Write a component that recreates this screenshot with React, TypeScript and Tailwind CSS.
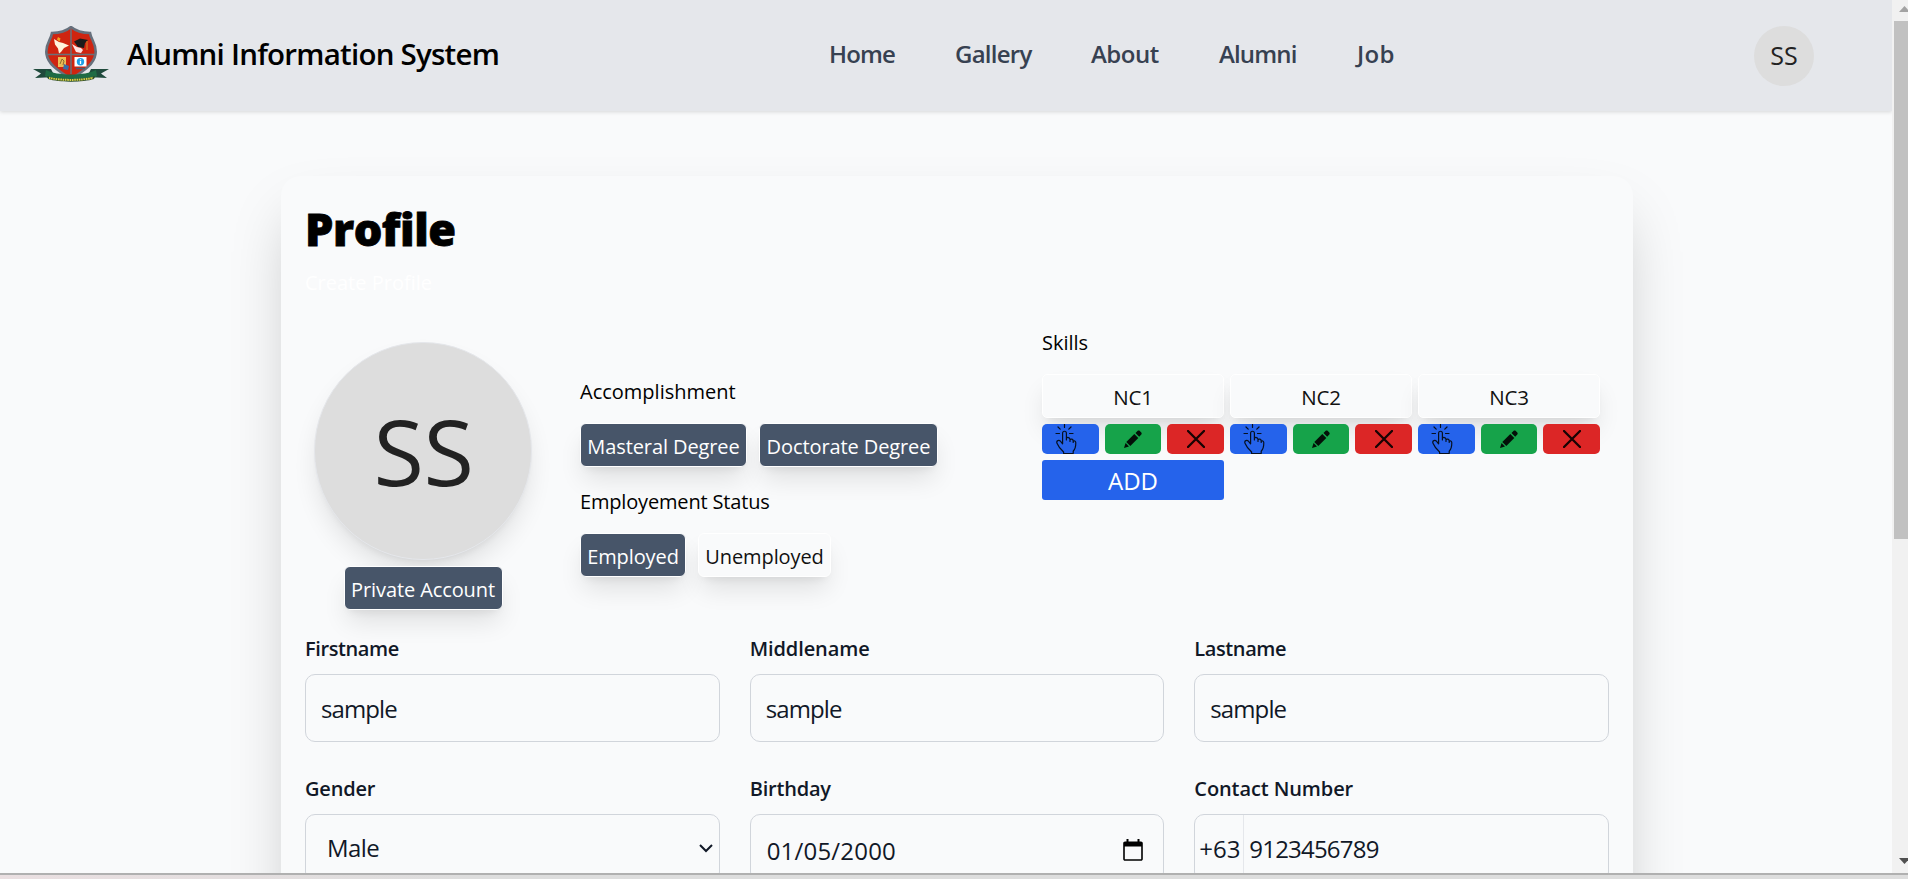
import React from "react";

const cn = (...c: (string | undefined)[]) => c.filter(Boolean).join(" ");

function Crest() {
  return (
    <svg width="76" height="56" viewBox="0 0 76 56" className="block">
      <path d="M0 43 L18 43 L22 51 L2 52 L8 47.5 Z" fill="#1f4a3c" />
      <path d="M76 43 L58 43 L54 51 L74 52 L68 47.5 Z" fill="#1f4a3c" />
      <path d="M38 1 C32 6 26 7 19 7 C18 14 12 18 13.500 28 C15 38 24 44 38 53 C52 44 61 38 62.500 28 C64 18 58 14 57 7 C50 7 44 6 38 1Z" fill="#cf2410" stroke="#66707c" strokeWidth="2.600" />
      <path d="M38 3 V48 M14 28.500 H62" stroke="#6b7078" strokeWidth="1.500" />
      <path d="M21 13 l5 3 4 1 6 2.500 -5 2.500 -3 4 -2 1.500 -1-5 -3-4z" fill="#fff3dc" />
      <path d="M25 11 l2.500 1.500 -1 3 -2.500-2z" fill="#f2a022" />
      <path d="M41 15.500 l6-3 8 1.500 -3 3 -1 5 -6-1z" fill="#1b1b1b" />
      <path d="M39 18 l5 3 4 1 2 2 -2 3 -5-1z" fill="#fbe3e3" />
      <path d="M54 15 l0 9" stroke="#d58a2a" strokeWidth="1" />
      <rect x="25" y="31" width="8" height="10" fill="#eebb55" />
      <path d="M27 38 l2-5 2 2 -1 4" stroke="#6d5a2a" strokeWidth=".8" fill="none" />
      <path d="M31 38 l5 2 -1 4 -5-1z" fill="#3c6ea5" />
      <rect x="41.500" y="31" width="12" height="9.500" fill="#fff" />
      <circle cx="47.500" cy="35.700" r="3.700" fill="#1f9fe6" />
      <path d="M47.500 33.200 v1 M47.500 35 v3" stroke="#fff" strokeWidth="1.300" />
      <path d="M43 42.500 h9" stroke="#4b5d70" strokeWidth="1.500" />
      <path d="M13 44 C24 50 52 50 63 44 L64 50 C56 57 20 57 12 50 Z" fill="#1f6b45" />
      <path d="M14 50 C26 54 50 54 62 50 L61 53 C50 56.500 26 56.500 15 53Z" fill="#2c4a28" />
      <path d="M16 51.800 C28 54.600 48 54.600 60 51.800" stroke="#d6d24a" strokeWidth="2" strokeDasharray="1.600 .7" fill="none" />
    </svg>
  );
}

const TapIcon = () => (
  <svg width="22" height="30" viewBox="0 0 22 30" fill="none" stroke="#06101f" strokeWidth="1.200" strokeLinecap="round" strokeLinejoin="round">
    <path d="M9.500 .5V3.500M3 3l2.200 2.200M16 3l-2.200 2.200M1 9.500H4.500M14.500 9.500H18" />
    <path d="M7.600 19.500V9.200C7.600 6.600 11.400 6.600 11.400 9.200V16M11.400 14.500c.6-1.600 3.600-1.300 3.600 1V17.500M15 15.800c.8-1.300 3.200-.8 3.200 1.200V18.500M18.200 17.300c.9-.9 2.600-.2 2.600 1.500 0 4-.3 6.200-2.600 8.400V29.500H8.600V28C5.500 25.300 3.300 22.300 2 19.200c-1-2.500 2-3.700 3.400-2L7.600 19.800" />
  </svg>
);

const PencilIcon = () => (
  <svg width="18" height="18" viewBox="0 0 18 18" fill="#031008">
    <path d="M0 18 L1.600 13 L5 16.400 Z" />
    <path d="M2.300 11.900 L10.300 3.900 L14.300 7.900 L6.300 15.900 Z" />
    <path d="M11.500 3 L13.700 .8 C14.200 .3 15.100 .3 15.600 .8 L17.300 2.500 C17.800 3 17.800 3.900 17.300 4.400 L15.200 6.700 Z" />
  </svg>
);

const CloseIcon = () => (
  <svg width="18" height="18" viewBox="0 0 18 18" stroke="#170303" strokeWidth="2.300" strokeLinecap="round">
    <path d="M1 1 L17 17 M17 1 L1 17" />
  </svg>
);

const CalendarIcon = () => (
  <svg width="20" height="22" viewBox="0 0 20 22">
    <path d="M2 2.500H18C19 2.500 19.800 3.300 19.800 4.300V20C19.800 21 19 21.800 18 21.800H2C1 21.800 .2 21 .2 20V4.300C.2 3.300 1 2.500 2 2.500ZM1.800 7.500V20.200H18.200V7.500Z" fill="#000" fillRule="evenodd" />
    <path d="M3.500 0h2v3h-2zM14.500 0h2v3h-2z" fill="#000" />
  </svg>
);

const raised = "shadow-[0_15px_26px_-4px_rgba(0,0,0,0.11),0_6px_9px_-6px_rgba(0,0,0,0.1)]";

function Chip({ label, width, active = true }: { label: string; width: string; active?: boolean }) {
  return (
    <div
      className={cn(
        "flex h-[44px] shrink-0 items-center justify-center rounded-[6px] border border-white text-[20px]",
        raised,
        width,
        active ? "bg-[#475569] text-white" : "bg-[#f9fafb] text-[#111]"
      )}
    >
      <span className="whitespace-nowrap pt-[4px] leading-[30px] tracking-[-0.1px]">{label}</span>
    </div>
  );
}

const NAV = [
  { label: "Home", cls: "w-[126px] tracking-[-0.9px]" },
  { label: "Gallery", cls: "w-[136px] tracking-[-0.75px]" },
  { label: "About", cls: "w-[128px] tracking-[-0.5px]" },
  { label: "Alumni", cls: "w-[138px] tracking-[-0.85px]" },
  { label: "Job", cls: "w-[60px] tracking-[0.3px]" },
];

function Skill({ name }: { name: string }) {
  return (
    <div className="flex flex-col gap-[6px]">
      <div className={cn("flex h-[44px] items-center justify-center rounded-[5px] border border-white bg-[#f9fafb] pt-[2px] text-[20.5px] text-[#111]", raised)}>
        <span className="tracking-[-0.2px]">{name}</span>
      </div>
      <div className="relative grid h-[30px] grid-cols-[57px_56px_57px] gap-[6px]">
        <div className="overflow-hidden rounded-[5px] bg-[#2563eb] pl-[13px]"><TapIcon /></div>
        <div className="flex items-center justify-center rounded-[5px] bg-[#16a34a]"><PencilIcon /></div>
        <div className="flex items-center justify-center rounded-[5px] bg-[#dc2626]"><CloseIcon /></div>
      </div>
    </div>
  );
}

function Field({ label, text, children }: { label: string; text: string; children: React.ReactNode }) {
  return (
    <div className="flex flex-col">
      <div className={cn("mb-[10px] h-[30px] text-[20px] font-semibold leading-[30px]", text)}>{label}</div>
      <div className="flex h-[68px] items-center rounded-[10px] border border-[#d1d5db] text-[24px] leading-[30px]">{children}</div>
    </div>
  );
}

export default function App() {
  return (
    <div className="flex h-[879px] w-[1908px] flex-col overflow-hidden bg-[#f9fafb] font-['Open_Sans','Noto_Sans',sans-serif]">
      <div className="flex h-[873px] shrink-0">
        <div className="h-[873px] w-[1892px] overflow-hidden">
          <header className="flex h-[111px] items-center bg-[#e5e7eb] pb-px shadow-[0_1px_4px_rgba(0,0,0,0.14)]">
            <div className="ml-[33px] w-[76px] pb-[3px]"><Crest /></div>
            <div className="ml-[18px] w-[702px] whitespace-nowrap pb-[2px] text-[29.5px] font-semibold leading-[36px] tracking-[-0.76px] text-black">
              Alumni Information System
            </div>
            <nav className="flex pb-[2px] text-[24px] font-semibold leading-[30px] text-[#374151]">
              {NAV.map((n) => (
                <a key={n.label} className={n.cls}>{n.label}</a>
              ))}
            </nav>
            <div className="ml-[337px] mt-[2px] flex size-[60px] items-center justify-center rounded-full bg-[#ddd] text-[25px] text-[#222]">SS</div>
          </header>

          <main className="ml-[281px] mt-[65px] h-[1200px] w-[1352px] rounded-[20px] bg-[#f9fafb] px-[24px] pt-[23px] shadow-[0_31px_62px_-15px_rgba(0,0,0,0.25)]">
            <h1 className="h-[60px] text-[45px] font-extrabold leading-[60px] tracking-[-0.45px] text-black [-webkit-text-stroke:0.8px_#000]">Profile</h1>
            <p className="mt-[9px] h-[30px] text-[20px] leading-[30px] text-white">Create Profile</p>

            <section className="mt-[30px] flex h-[281px]">
              <div className="mt-[14px] flex w-[236px] flex-col items-center">
                <div className={cn("flex size-[218px] shrink-0 items-center justify-center rounded-full border border-[#e5e7eb] bg-[#ddd] pl-px text-[92px] leading-none tracking-[-0.5px] text-[#222]", raised)}>SS</div>
                <div className="mt-[6px]"><Chip label="Private Account" width="w-[159px]" /></div>
              </div>
              <div className="ml-[39px] flex w-[462px] flex-col pt-[49px] text-[20px] leading-[30px] text-black">
                <div className="h-[30px]">Accomplishment</div>
                <div className="mt-[16px] flex gap-[12px]">
                  <Chip label="Masteral Degree" width="w-[167px]" />
                  <Chip label="Doctorate Degree" width="w-[179px]" />
                </div>
                <div className="mt-[20px] h-[30px] tracking-[-0.17px]">Employement Status</div>
                <div className="mt-[16px] flex gap-[12px]">
                  <Chip label="Employed" width="w-[106px]" />
                  <Chip label="Unemployed" width="w-[133px]" active={false} />
                </div>
              </div>
              <div className="flex w-[558px] flex-col">
                <div className="h-[30px] text-[20px] leading-[30px] text-black">Skills</div>
                <div className="mt-[16px] grid grid-cols-[182px_182px_182px] gap-[6px]">
                  <Skill name="NC1" />
                  <Skill name="NC2" />
                  <Skill name="NC3" />
                  <div className="flex h-[40px] items-center justify-center rounded-[3px] bg-[#2563eb] pt-[2px] text-[24px] text-white">ADD</div>
                </div>
              </div>
            </section>

            <section className="mt-[25px] grid grid-cols-3 gap-x-[30px] gap-y-[32px] text-[#111827]">
              <Field label="Firstname" text="tracking-[-0.4px]"><span className="ml-[15px] pt-[2px] tracking-[-0.9px]">sample</span></Field>
              <Field label="Middlename" text="tracking-[-0.1px]"><span className="ml-[15px] pt-[2px] tracking-[-0.9px]">sample</span></Field>
              <Field label="Lastname" text="tracking-[-0.4px]"><span className="ml-[15px] pt-[2px] tracking-[-0.9px]">sample</span></Field>
              <Field label="Gender" text="tracking-[-0.2px]">
                <span className="ml-[21px] tracking-[-0.6px]">Male</span>
                <svg className="ml-auto mr-[6px]" width="14" height="9" viewBox="0 0 14 9" fill="none" stroke="#111827" strokeWidth="2"><path d="M1 1 L7 7 L13 1" /></svg>
              </Field>
              <Field label="Birthday" text="tracking-[-0.2px]">
                <span className="ml-[16px] pt-[5px] tracking-[0.2px]">01/05/2000</span>
                <span className="ml-auto mr-[20px] pt-[3px]"><CalendarIcon /></span>
              </Field>
              <Field label="Contact Number" text="tracking-[-0.1px]">
                <span className="flex h-full w-[49px] items-center border-r border-[#e5e7eb] pl-[4px] pt-[2px]">+63</span>
                <span className="ml-[5px] pt-[2px] tracking-[-0.8px]">9123456789</span>
              </Field>
            </section>
          </main>
        </div>
        <aside className="flex h-[873px] w-[16px] flex-col bg-[#f1f1f1] pl-[2px]">
          <svg width="14" height="21" viewBox="0 0 14 21"><path d="M5 12 L10.500 6 L16 12Z" fill="#a3a3a3" /></svg>
          <div className="h-[518px] bg-[#c1c1c1]" />
          <svg className="mt-auto" width="14" height="21" viewBox="0 0 14 21"><path d="M5 6 L10.500 12 L16 6Z" fill="#505050" /></svg>
        </aside>
      </div>
      <div className="h-[6px] border-t-2 border-[#b0b0b0] bg-linear-to-r from-[#eadfe1] via-[#dddddd] via-25% to-[#dddddd]" />
    </div>
  );
}
